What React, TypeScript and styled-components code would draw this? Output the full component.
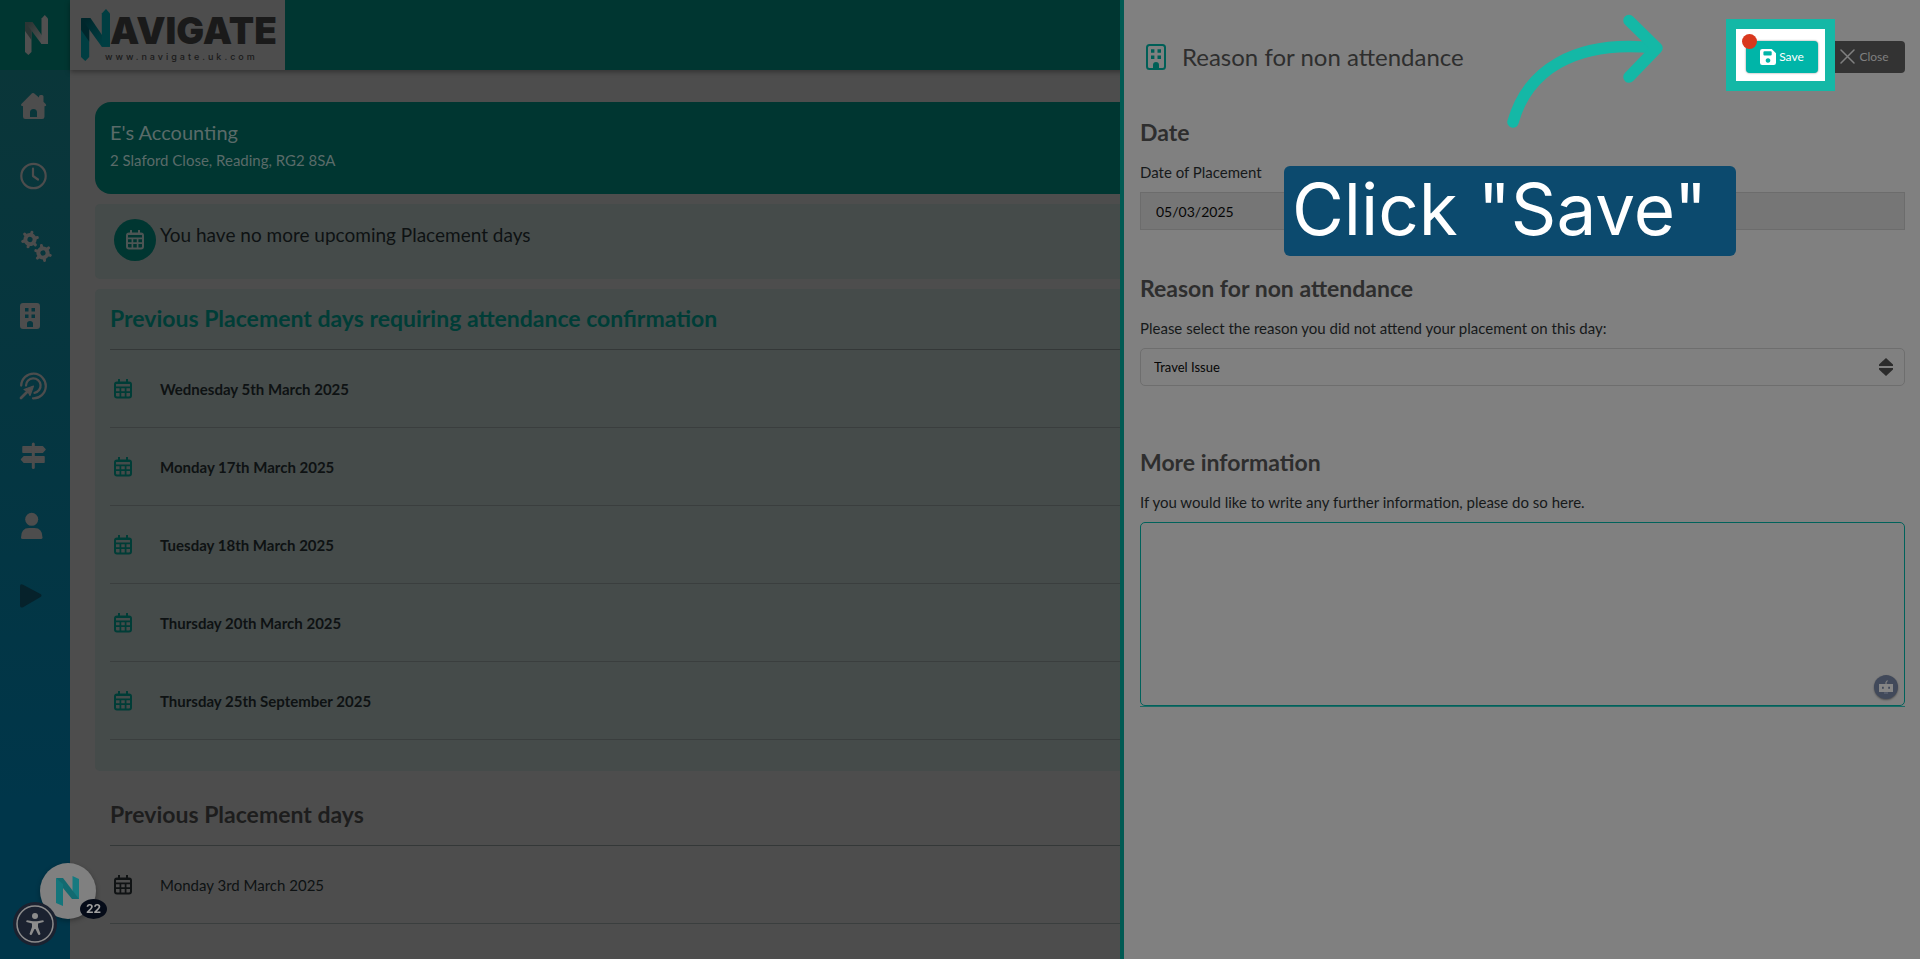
import React from 'react';
import styled, { createGlobalStyle } from 'styled-components';

const GlobalStyle = createGlobalStyle`
  *, *::before, *::after { box-sizing: border-box; }
  body {
    margin: 0;
    background: #4d4d4d;
    color: #0e1213;
    font-family: Lato, "Open Sans", sans-serif;
    font-size: 15px;
    line-height: 20px;
  }
  h1, h2, h3, p, ul { margin: 0; padding: 0; }
  ul { list-style: none; }
  svg { display: block; flex: none; }
`;

const Shell = styled.div`
  display: grid;
  grid-template-columns: 70px minmax(0, 1fr);
  min-height: 100vh;
`;

const Sidebar = styled.nav`
  display: flex;
  flex-direction: column;
  background: linear-gradient(#0a3639 70px, #053640 400px, #00364a 800px);
`;

const SideLogo = styled.a`
  display: flex;
  align-items: center;
  height: 70px;
  padding-left: 25px;
  background: #003631;
`;

const SideLink = styled.a<{ $dark?: boolean }>`
  display: flex;
  align-items: center;
  height: 70px;
  padding: 2px 0 0 19px;
  color: ${(p) => (p.$dark ? '#06222b' : '#4d4d4d')};
`;

const Page = styled.div`
  display: flex;
  flex-direction: column;
  min-width: 0;
`;

const TopBar = styled.header`
  display: flex;
  height: 70px;
  background: #003631;
  box-shadow: 0 2px 5px rgba(0, 0, 0, 0.35);
`;

const Brand = styled.a`
  display: flex;
  align-items: flex-start;
  width: 215px;
  padding: 9px 0 0 11px;
  background: #4d4d4d;
  color: #1a1a1a;
  text-decoration: none;
`;

const BrandText = styled.span`
  display: flex;
  flex-direction: column;
`;

const BrandName = styled.span`
  font: 900 37px/38px Inter, sans-serif;
  height: 41px;
  padding-top: 3px;
`;

const BrandUrl = styled.span`
  margin-left: -5px;
  font: 500 9px/14px Inter, sans-serif;
  letter-spacing: 3px;
`;

const Main = styled.main`
  display: flex;
  flex-direction: column;
  gap: 10px;
  padding: 32px 25px 0;
`;

const Employer = styled.section`
  height: 92px;
  padding: 17px 15px;
  border-radius: 16px;
  background: #003631;
  color: #5a6b69;
`;

const EmployerName = styled.h1`
  font-size: 20px;
  font-weight: 400;
  line-height: 26px;
`;

const Address = styled.p`
  margin-top: 5px;
`;

const Notice = styled.section`
  display: flex;
  gap: 4px;
  height: 75px;
  padding: 15px 19px;
  border-radius: 5px;
  background: #454b4a;
  font-size: 19px;
  line-height: 32px;
`;

const NoticeIcon = styled.span`
  display: grid;
  place-items: center;
  width: 42px;
  height: 42px;
  border-radius: 50%;
  background: #003631;
  color: #4d5554;
`;

const Days = styled.section<{ $pending?: boolean }>`
  padding: ${(p) => (p.$pending ? '14px 15px 31px' : '18px 15px 31px')};
  border-radius: 5px;
  background: ${(p) => (p.$pending ? '#454b4a' : 'transparent')};
`;

const DaysTitle = styled.h2<{ $pending?: boolean }>`
  height: 46px;
  color: ${(p) => (p.$pending ? '#003d37' : '#1d1d1d')};
  font-size: 23px;
  line-height: 30px;
`;

const DayList = styled.ul`
  border-top: 1px solid #343838;
`;

const DayRow = styled.li<{ $pending?: boolean }>`
  display: flex;
  align-items: center;
  gap: 28px;
  height: 78px;
  padding-left: 4px;
  border-bottom: 1px solid #3a3e3e;
  font-weight: ${(p) => (p.$pending ? 700 : 400)};

  svg { color: ${(p) => (p.$pending ? '#003d37' : '#101314')}; }
`;

const Drawer = styled.aside`
  position: fixed;
  inset: 0 0 0 auto;
  width: calc(100% * 5 / 12);
  padding: 0 15px 0 16px;
  border-left: 4px solid #005a53;
  background: #808080;
`;

const DrawerHeader = styled.header`
  display: flex;
  align-items: center;
  justify-content: space-between;
  height: 113px;
  margin-bottom: 6px;
`;

const DrawerTitle = styled.h2`
  display: flex;
  align-items: center;
  gap: 16px;
  padding-left: 6px;
  color: #2e2e2e;
  font-size: 24px;
  font-weight: 400;
  line-height: 30px;

  svg { color: #005f57; }
`;

const Actions = styled.div`
  display: flex;
`;

const ActionButton = styled.button<{ $primary?: boolean }>`
  display: flex;
  align-items: center;
  justify-content: center;
  gap: ${(p) => (p.$primary ? '3px' : '4px')};
  width: ${(p) => (p.$primary ? '72px' : '87px')};
  height: 32px;
  padding: ${(p) => (p.$primary ? '0' : '0 0 0 6px')};
  border: 0;
  border-radius: 4px;
  background: ${(p) => (p.$primary ? '#00b5a8' : '#333333')};
  color: ${(p) => (p.$primary ? '#ffffff' : '#808080')};
  font: 400 12px/16px Lato, sans-serif;
  position: ${(p) => (p.$primary ? 'relative' : 'static')};
  z-index: ${(p) => (p.$primary ? 2 : 'auto')};
  box-shadow: ${(p) => (p.$primary ? '0 0 2px rgba(0, 0, 0, 0.5)' : 'none')};
`;

const Spotlight = styled.div`
  position: relative;
`;

const SpotlightFrame = styled.span`
  position: absolute;
  inset: -22px -17px -18px -20px;
  z-index: 1;
  border: 10px solid #14b8a6;
  background: #ffffff;
`;

const RecordDot = styled.span`
  position: absolute;
  top: -7px;
  left: -4px;
  z-index: 3;
  width: 15px;
  height: 15px;
  border-radius: 50%;
  background: #d9381e;
`;

const Guide = styled.svg`
  position: absolute;
  top: 10px;
  right: 257px;
`;

const Callout = styled.div`
  position: absolute;
  top: 166px;
  right: 184px;
  width: 452px;
  height: 90px;
  padding-left: 8px;
  border-radius: 6px;
  background: #0c4a6e;
  color: #ffffff;
  font: 400 71px/86px Inter, sans-serif;
  white-space: nowrap;
`;

const Form = styled.form`
  display: flex;
  flex-direction: column;
`;

const Field = styled.section<{ $space?: number }>`
  display: flex;
  flex-direction: column;
  margin-bottom: ${(p) => p.$space ?? 0}px;
`;

const FieldTitle = styled.h3`
  margin-bottom: 17px;
  color: #2e2e2e;
  font-size: 23px;
  line-height: 26px;
`;

const Label = styled.label`
  margin-bottom: 10px;
  color: #16191a;
`;

const DateInput = styled.input`
  height: 38px;
  padding: 0 15px;
  border: 1px solid #6c6c6c;
  border-radius: 0;
  background: #767676;
  color: #060606;
  font: 400 14px/20px Lato, sans-serif;
`;

const SelectWrap = styled.div`
  position: relative;
  display: flex;

  svg {
    position: absolute;
    top: 10px;
    right: 12px;
    pointer-events: none;
  }
`;

const Select = styled.select`
  flex: 1;
  height: 38px;
  padding: 0 13px;
  appearance: none;
  border: 1px solid #6e6e6e;
  border-radius: 5px;
  background: transparent;
  color: #060606;
  font: 400 13px/20px Lato, sans-serif;
`;

const NotesWrap = styled.div`
  position: relative;
  display: flex;
  border-bottom: 1px solid #1d6a65;
`;

const Notes = styled.textarea`
  flex: 1;
  height: 184px;
  padding: 8px 12px;
  border: 1px solid #00625b;
  border-radius: 5px;
  background: transparent;
  font: 400 15px/20px Lato, sans-serif;
  resize: none;
`;

const AssistButton = styled.button`
  position: absolute;
  right: 7px;
  bottom: 7px;
  display: grid;
  place-items: center;
  width: 24px;
  height: 24px;
  padding: 0;
  border: 0;
  border-radius: 50%;
  background: #41495a;
  box-shadow: 0 1px 2px rgba(0, 0, 0, 0.4);
`;

const ChatButton = styled.button`
  position: fixed;
  left: 40px;
  bottom: 40px;
  display: grid;
  place-items: center;
  width: 56px;
  height: 56px;
  padding: 0;
  border: 0;
  border-radius: 50%;
  background: #808080;
  box-shadow: 0 2px 5px rgba(0, 0, 0, 0.3);
`;

const ChatCount = styled.span`
  position: absolute;
  right: -11px;
  bottom: 0;
  width: 27px;
  height: 20px;
  border-radius: 50%;
  background: #050b18;
  color: #a0a0a0;
  font: 700 12px/20px Inter, sans-serif;
`;

const AccessButton = styled.button`
  position: fixed;
  left: 13px;
  bottom: 13px;
  display: grid;
  place-items: center;
  width: 44px;
  height: 44px;
  padding: 0;
  border: 0;
  border-radius: 50%;
  background: #1b2230;
`;

const CalendarIcon = () => (
  <svg width="18" height="20" viewBox="0 0 18 20" fill="none" stroke="currentColor">
    <rect x="1" y="3.5" width="16" height="15" rx="2" strokeWidth="2" />
    <path d="M5 .5v3M13 .5v3" strokeWidth="2" strokeLinecap="round" />
    <path d="M1 4.2h16M1 8.3h16" strokeWidth="1.8" />
    <path d="M1 13.2h16M6.4 8v10M11.6 8v10" strokeWidth="1.7" />
  </svg>
);

const MarkIcon = ({ from, to, width, height }: { from: string; to: string; width: number; height: number }) => {
  const id = `mark-${from.slice(1)}`;
  return (
    <svg width={width} height={height} viewBox="0 0 23 40" preserveAspectRatio="none">
      <defs>
        <linearGradient id={id} x1="0" y1="0" x2="1" y2="1">
          <stop offset="0.1" stopColor={to} />
          <stop offset="0.8" stopColor={from} />
        </linearGradient>
      </defs>
      <path d="M0 7l6.5 6V37L3.4 40 0 37z" fill={from} />
      <path d="M0 7l6.5 6v12L0 16z" fill={to} />
      <path d="M0 7h7.500L23 29h-6.500z" fill={`url(#${id})`} />
      <path d="M16.5 3.5 19.8 0 23 3.5V29h-6.5z" fill={from} />
    </svg>
  );
};

const ChatMark = () => (
  <svg width="24" height="30" viewBox="0 0 24 30">
    <path d="M16.500 0 23 3v20h-6.500z" fill="#167a80" />
    <path d="M0 2h7l16 21h-7L7 12z" fill="#126a70" />
    <path d="M0 2l7 6v22l-7-3z" fill="#14757b" />
  </svg>
);

const HomeIcon = () => (
  <svg width="28" height="28" viewBox="0 0 28 28" fill="currentColor">
    <path fillRule="evenodd" d="M13 1.300q1-.8 2 0L20 5.600V4.500Q20 3 21.500 3H23q1.500 0 1.500 1.500v5.200l2.200 2.200q1.500 2.100-1.200 2.300v10.500q0 2.300-2.300 2.300H6.300Q4 27 4 24.700V14.200q-3.500-.3-1.200-2.800zM11 25h7v-4.500q0-3.500-3.500-3.500T11 20.500z" />
  </svg>
);

const ClockIcon = () => (
  <svg width="28" height="28" viewBox="0 0 28 28" fill="none" stroke="currentColor" strokeWidth="2.200" strokeLinecap="round" strokeLinejoin="round">
    <circle cx="14.500" cy="14" r="12.200" />
    <path d="M14 6.500V14l5 3.500" />
  </svg>
);

const Gear = ({ x, y, turn }: { x: number; y: number; turn: number }) => (
  <g transform={`translate(${x} ${y}) rotate(${turn})`} stroke="currentColor" fill="none">
    <circle r="4.600" strokeWidth="4" />
    {[0, 60, 120, 180, 240, 300].map((a) => (
      <path key={a} d="M0-6v-1.600" strokeWidth="3" strokeLinecap="round" transform={`rotate(${a})`} />
    ))}
  </g>
);

const GearsIcon = () => (
  <svg width="34" height="34" viewBox="0 0 34 34">
    <Gear x={11} y={10.500} turn={15} />
    <Gear x={24} y={24} turn={-12} />
  </svg>
);

const BuildingIcon = () => (
  <svg width="22" height="28" viewBox="0 0 22 28" fill="currentColor">
    <path fillRule="evenodd" d="M4 1h14q3 0 3 3v20q0 3-3 3H4q-3 0-3-3V4q0-3 3-3zM6 6v3.500h3.500V6zM12.500 6v3.500H16V6zM6 12.500V16h3.500v-3.500zM12.500 12.500V16H16v-3.500zM8 25h6v-3.500q0-2.500-3-2.500t-3 2.500z" />
  </svg>
);

const BuildingOutlineIcon = () => (
  <svg width="20" height="26" viewBox="0 0 20 26" fill="none" stroke="currentColor" strokeWidth="2">
    <rect x="1" y="1" width="18" height="24" rx="2.500" />
    <path d="M8 25v-4q0-2 2-2t2 2v4" fill="currentColor" />
    <path d="M5 7h3.400M11.500 7H15M5 13.200h3.400M11.500 13.200H15" strokeWidth="3.400" />
  </svg>
);

const TargetIcon = () => (
  <svg width="28" height="28" viewBox="0 0 28 28" fill="none" stroke="currentColor" strokeWidth="2.300" strokeLinecap="round">
    <path d="M2.200 13.500A12.300 12.300 0 1 1 14 26.300" />
    <path d="M7 13.500a7.300 7.300 0 1 1 8.500 7.300" />
    <path d="M2 26l6-6" strokeWidth="2.800" />
    <path d="M5 17.500 14.500 14l-3.500 9.500-2-3.700z" fill="currentColor" strokeWidth="1.200" strokeLinejoin="round" />
  </svg>
);

const SignIcon = () => (
  <svg width="28" height="28" viewBox="0 0 28 28" fill="currentColor" stroke="currentColor" strokeLinejoin="round" strokeWidth="1.500">
    <path d="M4 4.700h19.500L26 7.500l-2.500 2.800H4zM25 14.700H5L2.500 17.500 5 20.300h20z" />
    <path d="M14.300 2v23.500" strokeWidth="3" strokeLinecap="round" />
  </svg>
);

const PersonIcon = () => (
  <svg width="28" height="28" viewBox="0 0 28 28" fill="currentColor">
    <circle cx="12.700" cy="7.300" r="6.500" />
    <path d="M2 25.500Q2 16 10 16h5.500q8 0 8 9.500 0 1.500-1.500 1.500H3.500Q2 27 2 25.500z" />
  </svg>
);

const PlayIcon = () => (
  <svg width="28" height="28" viewBox="0 0 28 28" fill="currentColor">
    <path d="M1 4.500Q1 1.500 4 2.700L21.500 12q2 1.500 0 3L4 25.200Q1 26.500 1 23.500z" />
  </svg>
);

const SaveIcon = () => (
  <svg width="16" height="16" viewBox="0 0 16 16" fill="currentColor">
    <path fillRule="evenodd" d="M2.200 0h9.500L16 4.300v9.500q0 2.200-2.200 2.200H2.200Q0 16 0 13.800V2.200Q0 0 2.200 0zM4.500 2.300Q3.400 2.300 3.400 3.300v2.200q0 1 1.100 1h6.200q1 0 1-1V3.300q0-1-1-1zM8 9.200a2.300 2.300 0 1 0 .01 0z" />
  </svg>
);

const CloseIcon = () => (
  <svg width="15" height="15" viewBox="0 0 15 15" fill="none" stroke="currentColor" strokeWidth="1.500" strokeLinecap="round">
    <path d="M1 1l13 13M14 1 1 14" />
  </svg>
);

const SortIcon = () => (
  <svg width="14" height="18" viewBox="0 0 14 18" fill="#2b2b2b">
    <path d="M7 0l7 6.500V8H0V6.500zM7 18l7-6.500V10H0v1.500z" />
  </svg>
);

const RobotIcon = () => (
  <svg width="14" height="14" viewBox="0 0 14 14">
    <path d="M7 4V2.500L8.500.5" stroke="#808080" fill="none" strokeWidth="1.200" />
    <path fillRule="evenodd" d="M0 4h14v8H0zM3 6.800v2h1.800v-2zM9.200 6.800v2H11v-2z" fill="#858585" />
    <path d="M5 13h4" stroke="#666d7a" />
  </svg>
);

const AccessIcon = () => (
  <svg width="40" height="40" viewBox="0 0 40 40" fill="#8c8c8c">
    <circle cx="20" cy="20" r="18" fill="none" stroke="#8c8c8c" strokeWidth="1.500" />
    <circle cx="20" cy="12" r="3" />
    <path d="M12 16.200 18 17.200h4l6-1q1.500.5.500 1.800L23 19.500v3.500l2.500 7q-1 1.600-2.300.4L20.500 25h-1l-2.700 5.400q-1.300 1.200-2.300-.4l2.500-7v-3.500L11.500 18q-1-1.300.5-1.800z" />
  </svg>
);

const navItems = [
  { label: 'Home', icon: <HomeIcon /> },
  { label: 'Timeline', icon: <ClockIcon /> },
  { label: 'Settings', icon: <GearsIcon /> },
  { label: 'Employers', icon: <BuildingIcon /> },
  { label: 'Goals', icon: <TargetIcon /> },
  { label: 'Pathways', icon: <SignIcon /> },
  { label: 'Profile', icon: <PersonIcon /> },
  { label: 'Play', icon: <PlayIcon />, dark: true },
];

const pendingDays = [
  'Wednesday 5th March 2025',
  'Monday 17th March 2025',
  'Tuesday 18th March 2025',
  'Thursday 20th March 2025',
  'Thursday 25th September 2025',
];

const pastDays = ['Monday 3rd March 2025'];

export default function App() {
  return (
    <>
      <GlobalStyle />
      <Shell>
        <Sidebar aria-label="Main">
          <SideLogo href="#" aria-label="Navigate">
            <MarkIcon from="#505050" to="#2b3534" width={23} height={40} />
          </SideLogo>
          {navItems.map((item) => (
            <SideLink key={item.label} href="#" aria-label={item.label} $dark={item.dark}>
              {item.icon}
            </SideLink>
          ))}
        </Sidebar>

        <Page>
          <TopBar>
            <Brand href="#">
              <MarkIcon from="#003e42" to="#00262b" width={29} height={52} />
              <BrandText>
                <BrandName>AVIGATE</BrandName>
                <BrandUrl>www.navigate.uk.com</BrandUrl>
              </BrandText>
            </Brand>
          </TopBar>

          <Main>
            <Employer>
              <EmployerName>E's Accounting</EmployerName>
              <Address>2 Slaford Close, Reading, RG2 8SA</Address>
            </Employer>

            <Notice>
              <NoticeIcon><CalendarIcon /></NoticeIcon>
              <p>You have no more upcoming Placement days</p>
            </Notice>

            <Days $pending>
              <DaysTitle $pending>Previous Placement days requiring attendance confirmation</DaysTitle>
              <DayList>
                {pendingDays.map((day) => (
                  <DayRow key={day} $pending><CalendarIcon />{day}</DayRow>
                ))}
              </DayList>
            </Days>

            <Days>
              <DaysTitle>Previous Placement days</DaysTitle>
              <DayList>
                {pastDays.map((day) => (
                  <DayRow key={day}><CalendarIcon />{day}</DayRow>
                ))}
              </DayList>
            </Days>
          </Main>
        </Page>
      </Shell>

      <ChatButton type="button" aria-label="Open chat">
        <ChatMark />
        <ChatCount>22</ChatCount>
      </ChatButton>
      <AccessButton type="button" aria-label="Accessibility options"><AccessIcon /></AccessButton>

      <Drawer>
        <DrawerHeader>
          <DrawerTitle><BuildingOutlineIcon />Reason for non attendance</DrawerTitle>
          <Actions>
            <Spotlight>
              <SpotlightFrame />
              <ActionButton type="submit" form="absence" $primary><SaveIcon />Save</ActionButton>
              <RecordDot />
            </Spotlight>
            <ActionButton type="button"><CloseIcon />Close</ActionButton>
          </Actions>
        </DrawerHeader>

        <Form id="absence">
          <Field $space={45}>
            <FieldTitle>Date</FieldTitle>
            <Label htmlFor="date">Date of Placement</Label>
            <DateInput id="date" type="text" readOnly value="05/03/2025" />
          </Field>
          <Field $space={63}>
            <FieldTitle>Reason for non attendance</FieldTitle>
            <Label htmlFor="reason">Please select the reason you did not attend your placement on this day:</Label>
            <SelectWrap>
              <Select id="reason" defaultValue="travel">
                <option value="travel">Travel Issue</option>
              </Select>
              <SortIcon />
            </SelectWrap>
          </Field>
          <Field>
            <FieldTitle>More information</FieldTitle>
            <Label htmlFor="notes">If you would like to write any further information, please do so here.</Label>
            <NotesWrap>
              <Notes id="notes" />
              <AssistButton type="button" aria-label="Writing assistant"><RobotIcon /></AssistButton>
            </NotesWrap>
          </Field>
        </Form>

        <Guide width="160" height="120" viewBox="0 0 160 120" fill="none" stroke="#14b8a6" strokeWidth="11.500" strokeLinecap="round" strokeLinejoin="round">
          <path d="M10 112C24 62 70 29 152 38" />
          <path d="M126 10.500 154 38 126 67" />
        </Guide>
        <Callout>Click "Save"</Callout>
      </Drawer>
    </>
  );
}
